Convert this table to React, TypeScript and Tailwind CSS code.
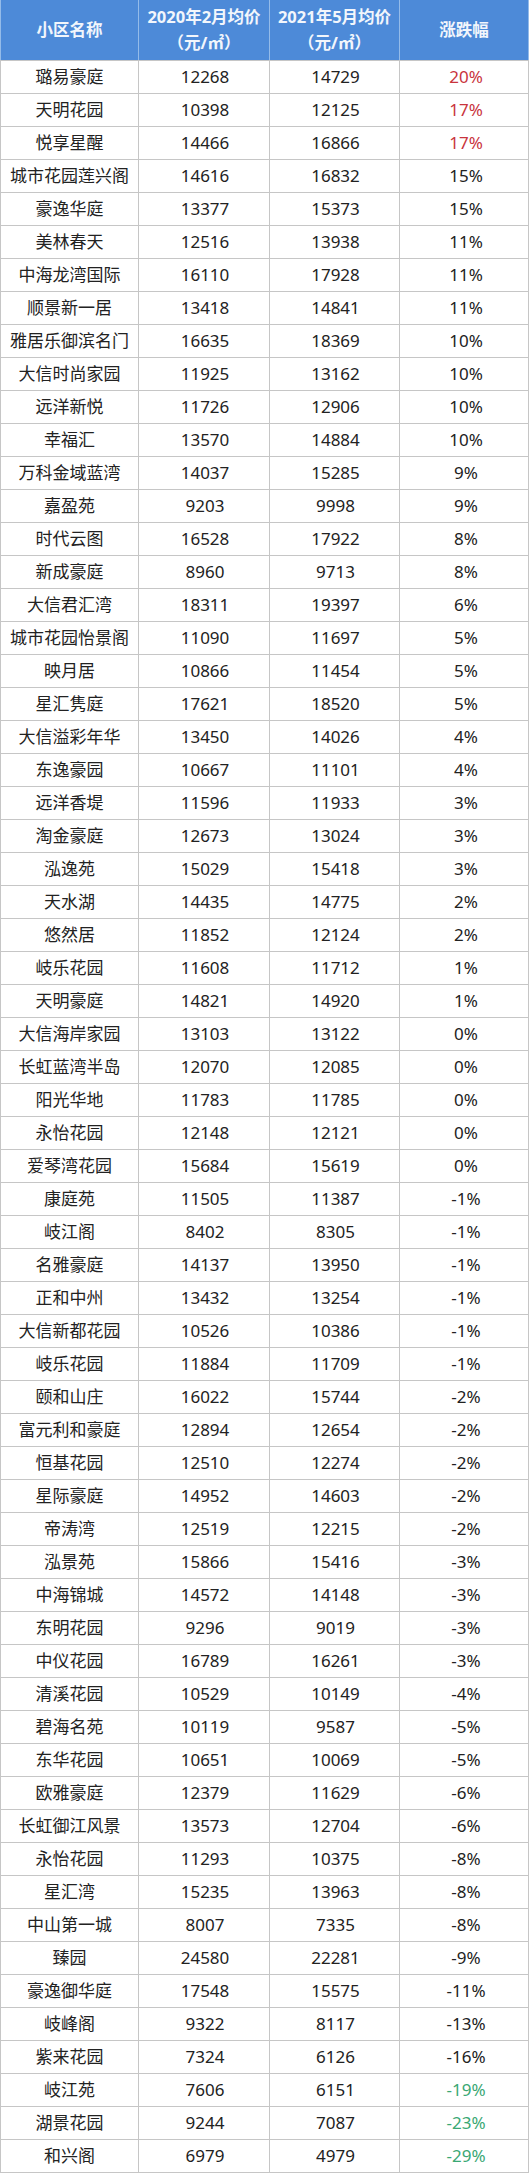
type Row = [string, number, number, number];

const rows: Row[] = [
  ["璐易豪庭", 12268, 14729, 20],
  ["天明花园", 10398, 12125, 17],
  ["悦享星醒", 14466, 16866, 17],
  ["城市花园莲兴阁", 14616, 16832, 15],
  ["豪逸华庭", 13377, 15373, 15],
  ["美林春天", 12516, 13938, 11],
  ["中海龙湾国际", 16110, 17928, 11],
  ["顺景新一居", 13418, 14841, 11],
  ["雅居乐御滨名门", 16635, 18369, 10],
  ["大信时尚家园", 11925, 13162, 10],
  ["远洋新悦", 11726, 12906, 10],
  ["幸福汇", 13570, 14884, 10],
  ["万科金域蓝湾", 14037, 15285, 9],
  ["嘉盈苑", 9203, 9998, 9],
  ["时代云图", 16528, 17922, 8],
  ["新成豪庭", 8960, 9713, 8],
  ["大信君汇湾", 18311, 19397, 6],
  ["城市花园怡景阁", 11090, 11697, 5],
  ["映月居", 10866, 11454, 5],
  ["星汇隽庭", 17621, 18520, 5],
  ["大信溢彩年华", 13450, 14026, 4],
  ["东逸豪园", 10667, 11101, 4],
  ["远洋香堤", 11596, 11933, 3],
  ["淘金豪庭", 12673, 13024, 3],
  ["泓逸苑", 15029, 15418, 3],
  ["天水湖", 14435, 14775, 2],
  ["悠然居", 11852, 12124, 2],
  ["岐乐花园", 11608, 11712, 1],
  ["天明豪庭", 14821, 14920, 1],
  ["大信海岸家园", 13103, 13122, 0],
  ["长虹蓝湾半岛", 12070, 12085, 0],
  ["阳光华地", 11783, 11785, 0],
  ["永怡花园", 12148, 12121, 0],
  ["爱琴湾花园", 15684, 15619, 0],
  ["康庭苑", 11505, 11387, -1],
  ["岐江阁", 8402, 8305, -1],
  ["名雅豪庭", 14137, 13950, -1],
  ["正和中州", 13432, 13254, -1],
  ["大信新都花园", 10526, 10386, -1],
  ["岐乐花园", 11884, 11709, -1],
  ["颐和山庄", 16022, 15744, -2],
  ["富元利和豪庭", 12894, 12654, -2],
  ["恒基花园", 12510, 12274, -2],
  ["星际豪庭", 14952, 14603, -2],
  ["帝涛湾", 12519, 12215, -2],
  ["泓景苑", 15866, 15416, -3],
  ["中海锦城", 14572, 14148, -3],
  ["东明花园", 9296, 9019, -3],
  ["中仪花园", 16789, 16261, -3],
  ["清溪花园", 10529, 10149, -4],
  ["碧海名苑", 10119, 9587, -5],
  ["东华花园", 10651, 10069, -5],
  ["欧雅豪庭", 12379, 11629, -6],
  ["长虹御江风景", 13573, 12704, -6],
  ["永怡花园", 11293, 10375, -8],
  ["星汇湾", 15235, 13963, -8],
  ["中山第一城", 8007, 7335, -8],
  ["臻园", 24580, 22281, -9],
  ["豪逸御华庭", 17548, 15575, -11],
  ["岐峰阁", 9322, 8117, -13],
  ["紫来花园", 7324, 6126, -16],
  ["岐江苑", 7606, 6151, -19],
  ["湖景花园", 9244, 7087, -23],
  ["和兴阁", 6979, 4979, -29],
];

const font = { fontFamily: '"Noto Sans", "Noto Sans CJK SC", sans-serif' };

// red for the top risers, green for the biggest drops
function changeColor(v: number) {
  if (v >= 17) return "text-[#c9343d]";
  if (v <= -19) return "text-[#3aa874]";
  return "text-[#222]";
}

export default function App() {
  return (
    <div className="w-[529px] bg-white" style={font}>
      <div className="grid grid-cols-[137px_130px_129px_128px] gap-x-px bg-[#94bbe9] px-px">
        {["小区名称", "2020年2月均价", "2021年5月均价", "涨跌幅"].map((h, i) => (
          <div
            key={h}
            className="flex h-[60px] flex-col items-center justify-center bg-[#4d8ad8] text-[16.5px] leading-[26px] font-bold text-[#f2f6fc]"
          >
            <span>{h}</span>
            {(i === 1 || i === 2) && <span>（元/㎡）</span>}
          </div>
        ))}
      </div>
      <div className="grid grid-cols-[137px_130px_129px_128px] gap-px bg-[#c6c6c6] px-px py-px">
        {rows.map(([name, a, b, pct], i) => (
          <div key={i} className="contents">
            <div className="flex h-[32px] items-center justify-center bg-white text-[17px] text-[#222]">
              {name}
            </div>
            <div className="flex h-[32px] items-center justify-center bg-white pl-[2px] text-[17px] text-[#222]">
              {a}
            </div>
            <div className="flex h-[32px] items-center justify-center bg-white pl-[2px] text-[17px] text-[#222]">
              {b}
            </div>
            <div
              className={`flex h-[32px] items-center justify-center bg-white pl-[4px] text-[17px] ${changeColor(pct)}`}
            >
              {pct}%
            </div>
          </div>
        ))}
      </div>
    </div>
  );
}
